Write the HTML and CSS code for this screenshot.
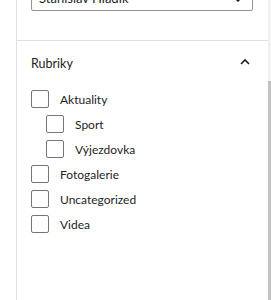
FILE: index.html
```html
<!DOCTYPE html>
<html lang="cs">
<head>
<meta charset="utf-8">
<link rel="stylesheet" href="styles.css">
</head>
<body>
<div class="frame">
  <div class="gutter"></div>
  <div class="panel">
    <div class="section top">
      <div class="select">
        <span class="select-text">Stanislav Hladík</span>
        <svg class="select-arrow" width="12" height="12" viewBox="0 0 12 12"><path d="M2 4 L6 8 L10 4" fill="none" stroke="#1e1e1e" stroke-width="1.5"/></svg>
      </div>
    </div>
    <div class="section cats">
      <div class="cats-head">
        <span class="cats-title">Rubriky</span>
        <svg class="chev" width="12" height="8" viewBox="0 0 12 8"><path d="M2 6 L6 2 L10 6" fill="none" stroke="#1e1e1e" stroke-width="1.6"/></svg>
      </div>
      <ul class="list">
        <li class="row"><span class="box"></span><span class="label">Aktuality</span></li>
        <li class="row sub"><span class="box"></span><span class="label">Sport</span></li>
        <li class="row sub"><span class="box"></span><span class="label">Výjezdovka</span></li>
        <li class="row"><span class="box"></span><span class="label">Fotogalerie</span></li>
        <li class="row"><span class="box"></span><span class="label">Uncategorized</span></li>
        <li class="row"><span class="box"></span><span class="label">Videa</span></li>
      </ul>
    </div>
  </div>
  <div class="scrollbar"><div class="thumb"></div></div>
</div>
</body>
</html>
```
FILE: styles.css
```css
html, body {
  margin: 0;
  padding: 0;
  background: #fff;
}
body {
  width: 271px;
  height: 300px;
  overflow: hidden;
  font-family: Lato, "Noto Sans", sans-serif;
  color: #1e1e1e;
}
.frame {
  display: flex;
  height: 300px;
}
.gutter {
  width: 16px;
  flex: none;
}
.panel {
  flex: 1;
  border-left: 1px solid #e0e0e0;
  display: flex;
  flex-direction: column;
}
.scrollbar {
  width: 3px;
  flex: none;
  background: #f0f0f0;
  display: flex;
  flex-direction: column;
  padding-top: 81px;
}
.thumb {
  flex: 1;
  background: #c2c2c2;
}
.section.top {
  margin-top: -21px;
  padding: 0 15px 29px 14px;
  border-bottom: 1px solid #e0e0e0;
}
.select {
  border: 1px solid #949494;
  border-radius: 2px;
  display: flex;
  align-items: flex-end;
  justify-content: space-between;
  padding: 0 8px 3px 7px;
  box-sizing: content-box;
  height: 27px;
  font-size: 13px;
  line-height: 18px;
}
.select-arrow {
  margin-bottom: 2px;
}
.section.cats {
  padding: 0 15px 0 14px;
}
.cats-head {
  height: 44px;
  display: flex;
  align-items: center;
  justify-content: space-between;
  padding-right: 2px;
}
.cats-title {
  font-size: 12.5px;
}
.chev {
  margin-top: -2px;
}
.list {
  list-style: none;
  margin: 5px 0 0;
  padding: 0;
  display: flex;
  flex-direction: column;
  gap: 7px;
}
.row {
  display: flex;
  align-items: center;
  gap: 11px;
  height: 18px;
  font-size: 12px;
}
.row.sub {
  padding-left: 15px;
}
.box {
  width: 16px;
  height: 16px;
  border: 1px solid #757575;
  border-radius: 2px;
  flex: none;
}
```
